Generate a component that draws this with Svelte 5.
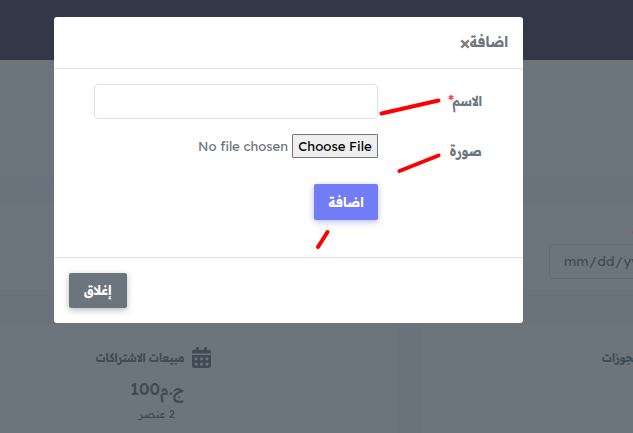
<script lang="ts">
	let name = $state('');
</script>

<div class="page" dir="rtl">
	<header class="topbar"></header>
	<section class="panel panel--intro"></section>
	<section class="panel panel--filter">
		<span class="date-label">من</span>
		<div class="date" dir="ltr">mm<i>/</i>dd<i>/</i>yyyy</div>
	</section>
	<div class="stats">
		<article class="stat stat--bookings" dir="ltr">
			<h4>مبيعات الحجوزات</h4>
		</article>
		<article class="stat stat--subs">
			<div class="stat__head">
				<svg viewBox="0 0 448 512" width="19" height="21" preserveAspectRatio="none">
					<path d="M0 464c0 26.5 21.5 48 48 48h352c26.500 0 48-21.500 48-48V192H0v272zm320-196c0-6.600 5.400-12 12-12h40c6.600 0 12 5.400 12 12v40c0 6.600-5.400 12-12 12h-40c-6.600 0-12-5.400-12-12v-40zm0 128c0-6.600 5.400-12 12-12h40c6.600 0 12 5.400 12 12v40c0 6.600-5.400 12-12 12h-40c-6.600 0-12-5.400-12-12v-40zM192 268c0-6.600 5.400-12 12-12h40c6.600 0 12 5.400 12 12v40c0 6.600-5.400 12-12 12h-40c-6.600 0-12-5.400-12-12v-40zm0 128c0-6.600 5.400-12 12-12h40c6.600 0 12 5.400 12 12v40c0 6.600-5.400 12-12 12h-40c-6.600 0-12-5.400-12-12v-40zM64 268c0-6.600 5.400-12 12-12h40c6.600 0 12 5.400 12 12v40c0 6.600-5.400 12-12 12H76c-6.600 0-12-5.400-12-12v-40zm0 128c0-6.600 5.400-12 12-12h40c6.600 0 12 5.400 12 12v40c0 6.600-5.400 12-12 12H76c-6.600 0-12-5.400-12-12v-40zM400 64h-48V16c0-8.800-7.200-16-16-16h-32c-8.800 0-16 7.200-16 16v48H160V16c0-8.800-7.200-16-16-16h-32c-8.800 0-16 7.200-16 16v48H48C21.500 64 0 85.500 0 112v48h448v-48c0-26.500-21.500-48-48-48z" />
				</svg>
				<h4>مبيعات الاشتراكات</h4>
			</div>
			<div class="stat__value">ج.م<b>100</b></div>
			<div class="stat__count">2 عنصر</div>
		</article>
	</div>

	<div class="modal">
		<div class="modal__header">
			<h5>اضافة</h5>
			<button class="close" aria-label="إغلاق">
				<svg viewBox="0 0 10 10" width="10" height="10"><path d="M1.300 1.300 8.700 8.700M8.700 1.300 1.300 8.700" /></svg>
			</button>
		</div>
		<div class="modal__body">
			<div class="row">
				<label for="name"><span class="ar">الاسم</span><sup>*</sup></label>
				<input id="name" type="text" bind:value={name} />
			</div>
			<div class="row row--file">
				<span class="label ar">صورة</span>
				<div class="file">
					<button class="file__btn">Choose File</button>
					<span class="file__name">No file chosen</span>
				</div>
			</div>
			<button class="btn btn--primary"><span class="ar">اضافة</span></button>
		</div>
		<div class="modal__footer">
			<button class="btn btn--secondary"><span class="ar">إغلاق</span></button>
		</div>
	</div>

	<!-- hand-drawn marker strokes -->
	<svg class="marks" viewBox="0 0 633 433">
		<path d="M381.500 113.500 438.500 100.500M399.500 171 438.500 155.500M318 247 327.500 232" />
	</svg>
</div>

<style>
	.page {
		position: relative;
		width: 633px;
		height: 433px;
		overflow: hidden;
		background: #6a727c;
		color: #404b57;
		font-family: 'Readex Pro', 'Lexend', 'Inter', 'DejaVu Sans', sans-serif;
		font-size: 13px;
	}

	h4,
	h5 {
		margin: 0;
	}

	button {
		font-family: inherit;
		padding: 0;
	}

	.ar,
	h4,
	h5 {
		display: inline-block;
		transform: scaleX(0.87);
		transform-origin: right center;
	}

	.topbar {
		height: 60px;
		background: #333846;
	}

	.panel {
		background: #6d757c;
		box-sizing: border-box;
		border-bottom: 1px solid #687079;
	}

	.panel--intro {
		height: 117px;
	}

	.panel--filter {
		margin-top: 28px;
		height: 86px;
		padding-top: 39px;
		position: relative;
	}

	.date-label {
		position: absolute;
		top: 16px;
		right: -16px;
		font-size: 12px;
		font-weight: 700;
	}

	.date {
		box-sizing: border-box;
		width: 170px;
		height: 35px;
		margin-right: -86px;
		padding-left: 14px;
		border: 1px solid #616975;
		border-radius: 4px;
		line-height: 32px;
		font-size: 13.3px;
	}

	.date i {
		font-style: normal;
		margin: 0 0.8px;
	}

	.stats {
		display: flex;
		gap: 26px;
		margin-top: 32px;
		height: 111px;
	}

	.stat {
		box-sizing: border-box;
		flex: none;
		background: #6d757c;
	}

	.stat h4 {
		font-size: 12px;
		line-height: 20px;
		white-space: nowrap;
		transform: translateY(1px) scaleX(0.875);
	}

	.stat--bookings {
		width: 210px;
		padding: 24px 0 0 179px;
	}

	.stat--bookings h4 {
		transform-origin: left center;
	}

	.stat--subs {
		width: 397px;
		padding: 23px 186px 0 0;
	}

	.stat__head {
		display: flex;
		align-items: center;
		gap: 7px;
		height: 22px;
	}

	.stat__head svg {
		flex: none;
		fill: currentColor;
	}

	.stat__value {
		margin: 8px 27px 0 0;
		font-size: 16.5px;
		font-weight: 600;
		line-height: 26px;
		transform: scaleX(0.95);
		transform-origin: right center;
	}

	.stat__value b {
		font-size: 17px;
		font-weight: 600;
	}

	.stat__count {
		margin: 3px 36px 0 0;
		font-size: 11.2px;
		line-height: 18px;
	}

	.modal {
		position: absolute;
		top: 17px;
		left: 54px;
		width: 469px;
		height: 306px;
		display: flex;
		flex-direction: column;
		background: #fff;
		border-radius: 3px;
		color: #6c757d;
	}

	.modal__header {
		box-sizing: border-box;
		height: 52px;
		padding: 0 15px 2px;
		display: flex;
		align-items: center;
		border-bottom: 1px solid #dee2e6;
	}

	.modal__header h5 {
		font-size: 15px;
		font-weight: 700;
	}

	.close {
		display: flex;
		margin: 4px -6px 0 0;
		border: 0;
		background: none;
	}

	.close svg {
		fill: none;
		stroke: #7f7f7f;
		stroke-width: 2.400;
	}

	.modal__body {
		flex: 1;
		padding: 15px 41px 0 40px;
	}

	.row {
		display: flex;
		justify-content: space-between;
		height: 35px;
	}

	.row label,
	.label {
		font-size: 14px;
		font-weight: 700;
		line-height: 35px;
	}

	sup {
		margin-right: -6px;
		color: #f1454c;
		line-height: 0;
		font-size: 13px;
		font-weight: 900;
		vertical-align: 1px;
	}

	.row input {
		box-sizing: border-box;
		width: 284px;
		height: 35px;
		margin: 0;
		border: 1px solid #dee2e6;
		border-radius: 4px;
	}

	.row--file {
		margin-top: 15px;
	}

	.file {
		width: 284px;
		height: 24px;
		display: flex;
		align-items: center;
		gap: 4px;
	}

	.file__btn {
		box-sizing: border-box;
		width: 86px;
		height: 24px;
		padding-bottom: 1px;
		border: 1px solid #767676;
		border-radius: 1px;
		background: #efefef;
		color: #000;
		font-size: 13.2px;
		white-space: nowrap;
	}

	.file__name {
		padding-bottom: 1px;
		font-size: 13.1px;
		white-space: nowrap;
	}

	.btn {
		display: block;
		border: 0;
		border-radius: 2px;
		color: #fff;
		font-size: 13.7px;
		font-weight: 700;
	}

	.btn .ar {
		transform: translateY(-1px) scaleX(0.88);
		transform-origin: center;
	}

	.btn--primary {
		width: 64px;
		height: 36px;
		margin: 15px 104px 0 0;
		background: #727cf5;
		box-shadow: 0 2px 6px rgba(114, 124, 245, 0.5);
	}

	.btn--secondary {
		width: 58px;
		height: 35px;
		background: #6c757d;
		box-shadow: 0 2px 6px rgba(108, 117, 125, 0.5);
	}

	.modal__footer {
		box-sizing: border-box;
		height: 66px;
		padding: 15px;
		display: flex;
		justify-content: flex-end;
		border-top: 1px solid #dee2e6;
	}

	.marks {
		position: absolute;
		inset: 0;
		fill: none;
		stroke: #f00;
		stroke-width: 4;
		stroke-linecap: round;
		pointer-events: none;
	}
</style>
